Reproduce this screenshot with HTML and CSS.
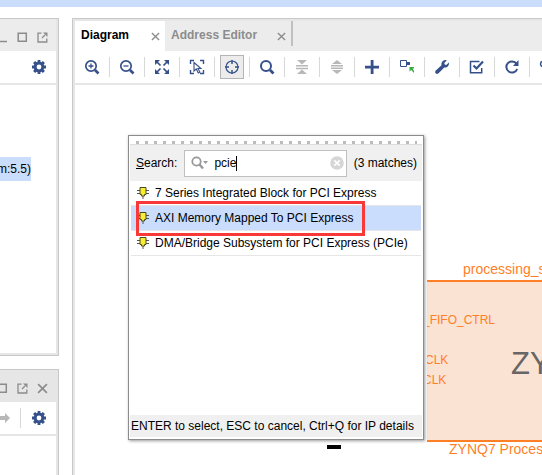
FILE: index.html
```html
<!DOCTYPE html>
<html lang="en">
<head>
<meta charset="utf-8">
<title>Block Design</title>
<link rel="stylesheet" href="styles.css">
</head>
<body>
<svg class="defs" aria-hidden="true">
  <symbol id="gear" viewBox="0 0 14 14"><path fill="currentColor" fill-rule="evenodd" d="M5.6 0h2.8v1.7l1.1.5 1.3-1.2 2.1 2.1-1.2 1.3.5 1.2H14v2.8h-1.9l-.5 1.2 1.3 1.3-2.1 2.1-1.3-1.2-1.1.5V14H5.6v-1.7l-1.1-.5L3.200 13 1.100 10.900l1.200-1.300-.5-1.200H0V5.600h1.800l.5-1.200-1.200-1.300 2.100-2.100 1.300 1.200 1.100-.5zM7 4.600a2.400 2.400 0 1 0 0 4.800 2.400 2.400 0 0 0 0-4.800z"/></symbol>
  <symbol id="square" viewBox="0 0 11 11"><path fill="none" stroke="currentColor" stroke-width="1.500" d="M1.200 1.200h8.100v8.100H1.200z"/></symbol>
  <symbol id="popout" viewBox="0 0 11 11"><path fill="none" stroke="currentColor" stroke-width="1.300" d="M4.500 1.200H1v8.800h8.800V6.500M5 6l3-3"/><path fill="currentColor" d="M6 .5h4.500V5z"/></symbol>
  <symbol id="cross" viewBox="0 0 10 10"><path fill="none" stroke="currentColor" stroke-width="1.500" d="M1 1l8 8M9 1L1 9"/></symbol>
  <symbol id="ip" viewBox="0 0 12 12"><path stroke="#555" fill="none" d="M0 3.500h12M0 6.500h12M6 8v4"/><path fill="#f8ed35" stroke="#4a4a22" d="M3 .5h6v7H7.500v1.500h-3V7.500H3z"/></symbol>
</svg>
<div class="band"></div>
<main class="workspace">
  <aside class="side">
    <section class="panel sources">
      <header class="panel-head">
        <button aria-label="Minimize"><svg width="11" height="11" viewBox="0 0 11 11"><path stroke="currentColor" stroke-width="1.500" d="M0 9.500h10"/></svg></button>
        <button aria-label="Maximize"><svg width="11" height="11"><use href="#square"/></svg></button>
        <button aria-label="Float"><svg width="11" height="11"><use href="#popout"/></svg></button>
      </header>
      <div class="panel-tools"><button aria-label="Settings"><svg width="14" height="14"><use href="#gear"/></svg></button></div>
      <div class="source-item">m:5.5)</div>
    </section>
    <section class="panel properties">
      <header class="panel-head">
        <button aria-label="Maximize"><svg width="11" height="11"><use href="#square"/></svg></button>
        <button aria-label="Float"><svg width="11" height="11"><use href="#popout"/></svg></button>
        <button aria-label="Close"><svg width="11" height="11"><use href="#cross"/></svg></button>
      </header>
      <div class="panel-tools">
        <button class="next" aria-label="Next"><svg width="13" height="12" viewBox="0 0 13 12"><path fill="#b8b8b8" d="M0 4h7V1l5 5-5 5V8H0z"/></svg></button>
        <button aria-label="Settings"><svg width="14" height="14"><use href="#gear"/></svg></button>
      </div>
    </section>
  </aside>
  <section class="editor">
    <nav class="tabs">
      <div class="tab active"><a href="#diagram">Diagram</a><button aria-label="Close Diagram"><svg width="9" height="9"><use href="#cross"/></svg></button></div>
      <div class="tab"><a href="#address">Address Editor</a><button aria-label="Close Address Editor"><svg width="9" height="9"><use href="#cross"/></svg></button></div>
    </nav>
    <div class="toolbar">
      <div class="tool"><button aria-label="Zoom in"><svg width="16" height="16" viewBox="0 0 16 16"><g fill="none" stroke="currentColor"><circle cx="7" cy="7" r="5.200" stroke-width="1.700"/><path stroke-width="2.600" d="M11 11l3.500 3.500"/><path stroke-width="1.300" d="M4.500 7h5M7 4.500v5"/></g></svg></button></div>
      <div class="tool"><button aria-label="Zoom out"><svg width="16" height="16" viewBox="0 0 16 16"><g fill="none" stroke="currentColor"><circle cx="7" cy="7" r="5.200" stroke-width="1.700"/><path stroke-width="2.600" d="M11 11l3.500 3.500"/><path stroke-width="1.300" d="M4.500 7h5"/></g></svg></button></div>
      <div class="tool"><button aria-label="Zoom fit"><svg width="16" height="16" viewBox="0 0 16 16"><path fill="currentColor" d="M1 1h5L1 6zM15 1v5l-5-5zM1 15v-5l5 5zM15 15h-5l5-5z"/><path stroke="currentColor" stroke-width="1.700" d="M2 2l4.500 4.500M14 2L9.500 6.500M2 14l4.500-4.500M14 14L9.500 9.500"/></svg></button></div>
      <div class="tool"><button aria-label="Select area"><svg width="16" height="16" viewBox="0 0 16 16"><g fill="none" stroke="currentColor"><path stroke-width="1.400" d="M1.500 5V1.500H5M11 1.500h3.500V5M1.500 11v3.500H5M11 14.500h3.500V11"/><path stroke-width="1.100" d="M5 3.500v8.500l2.300-2 2 4 1.600-1-2-3.500h3z"/></g></svg></button></div>
      <div class="tool"><button class="pressed" aria-label="Auto-fit selection"><svg width="16" height="16" viewBox="0 0 16 16"><g fill="none" stroke="currentColor"><circle cx="8" cy="8" r="6" stroke-width="1.200"/><path stroke-width="1.500" d="M8 1v4M8 11v4M1 8h4M11 8h4"/></g></svg></button></div>
      <div class="tool"><button aria-label="Search"><svg width="16" height="16" viewBox="0 0 16 16"><g fill="none" stroke="currentColor"><circle cx="7" cy="7" r="5" stroke-width="2"/><path stroke-width="2.800" d="M11 11l3.500 3.500"/></g></svg></button></div>
      <div class="tool"><button class="off" aria-label="Collapse"><svg width="16" height="16" viewBox="0 0 16 16"><path fill="currentColor" d="M3 1h10L8 5.500zM3 15h10l-5-4.500zM2 6h12v1.500H2zM2 8.800h12v1.500H2z"/></svg></button></div>
      <div class="tool"><button class="off" aria-label="Expand"><svg width="16" height="16" viewBox="0 0 16 16"><path fill="currentColor" d="M3 5h10L8 1zM3 11h10l-5 4zM2 6h12v1.500H2zM2 8.500h12V10H2z"/></svg></button></div>
      <div class="tool"><button aria-label="Add IP"><svg width="16" height="16" viewBox="0 0 16 16"><path fill="currentColor" d="M6.700 1h2.800v5.700H15v2.800H9.500V15H6.700V9.500H1V6.700h5.700z"/></svg></button></div>
      <div class="tool"><button aria-label="Make external"><svg width="16" height="16" viewBox="0 0 16 16"><path fill="none" stroke="currentColor" d="M1.500 1.500h6v6h-6z"/><path fill="currentColor" d="M8 3h3v3H8z"/><path fill="#38ab48" d="M10.500 8H15v1.500h-1.500L15 12v2l-2.800-3-1.700 1.500z"/></svg></button></div>
      <div class="tool"><button aria-label="Customize"><svg width="16" height="16" viewBox="0 0 16 16"><path fill="currentColor" d="M12.800 1.200L10.300 4l.4 1.500 1.500.4L15 3.500c.4 3-1.600 5.300-4.700 5l-6 6c-2 1.300-4-.7-2.800-2.700l6-5.600C7 3 9.500.5 12.800 1.200z"/></svg></button></div>
      <div class="tool"><button aria-label="Validate"><svg width="16" height="16" viewBox="0 0 16 16"><g fill="none" stroke="currentColor"><path stroke-width="1.500" d="M10.500 2.500h-9v11.200h11.200V9"/><path stroke-width="2.200" d="M4.500 6.500L7.500 9.500 14 2.500"/></g></svg></button></div>
      <div class="tool"><button aria-label="Regenerate"><svg width="16" height="16" viewBox="0 0 16 16"><path fill="none" stroke="currentColor" stroke-width="2" d="M12.500 4.700A5.600 5.600 0 1 0 13.200 10"/><path fill="currentColor" d="M14.500 1v6H9z"/></svg></button></div>
      <div class="tool"><button aria-label="Optimize routing"><svg width="16" height="16" viewBox="0 0 16 16"><g fill="none" stroke="currentColor" stroke-width="1.500"><circle cx="4" cy="5" r="2.500"/><path d="M6 5h6v7H3"/></g></svg></button></div>
    </div>
    <div class="canvas">
      <span class="node-name">processing_s</span>
      <div class="node">
        <span class="port fifo">_FIFO_CTRL</span>
        <span class="port clock-a">CLK</span>
        <span class="port clock-b">CLK</span>
        <span class="brand">ZY</span>
      </div>
      <span class="node-type">ZYNQ7 Proces</span>
      <span class="pin"></span>
    </div>
  </section>
</main>
<div class="dialog" role="dialog" aria-label="Add IP">
  <div class="grip"></div>
  <div class="search">
    <label for="query"><u>S</u>earch:</label>
    <div class="field">
      <svg width="18" height="14" viewBox="0 0 18 14"><circle cx="5.500" cy="5.500" r="4.200" fill="none" stroke="#999" stroke-width="1.800"/><path stroke="#999" stroke-width="2.400" d="M8.500 8.500l3.500 4"/><path fill="#999" d="M12 5h5l-2.500 3z"/></svg>
      <input id="query" type="text" value="pcie"><span class="caret"></span>
      <button class="clear" aria-label="Clear"><svg width="14" height="14" viewBox="0 0 14 14"><circle cx="7" cy="7" r="6.800" fill="#d6d6d6"/><path stroke="#fff" stroke-width="1.700" d="M4.300 4.300l5.400 5.400M9.700 4.300L4.300 9.700"/></svg></button>
    </div>
    <span>(3 matches)</span>
  </div>
  <ul class="results">
    <li><svg width="12" height="12"><use href="#ip"/></svg>7 Series Integrated Block for PCI Express</li>
    <li class="selected"><svg width="12" height="12"><use href="#ip"/></svg>AXI Memory Mapped To PCI Express<span class="marker"></span></li>
    <li><svg width="12" height="12"><use href="#ip"/></svg>DMA/Bridge Subsystem for PCI Express (PCIe)</li>
  </ul>
  <footer class="hint">ENTER to select, ESC to cancel, Ctrl+Q for IP details</footer>
</div>
</body>
</html>
```

FILE: styles.css
```css
* { box-sizing: border-box; }
body {
  margin: 0;
  height: 100vh;
  display: flex;
  flex-direction: column;
  overflow: hidden;
  background: #fff;
  color: #000;
  font: 12px/16px "Liberation Sans", Arial, sans-serif;
}
svg { display: block; flex: none; }
.defs { position: absolute; width: 0; height: 0; }
button { padding: 0; border: 0; background: none; color: inherit; font: inherit; }
a { color: inherit; text-decoration: none; }

.band { flex: none; height: 7px; background: #cbddfd; }
.workspace { flex: 1; min-height: 0; display: flex; gap: 13px; padding-top: 11px; }

/* Left column */
.side { flex: none; width: 59px; display: flex; flex-direction: column; gap: 13px; }
.panel {
  border: solid #c8c8c8;
  border-width: 1px 1px 1px 0;
  box-shadow: inset -2px -2px #e6e6e6;
  padding-right: 2px;
  overflow: hidden;
}
.sources { flex: 1; }
.properties { flex: none; height: 106px; border-bottom: 0; box-shadow: inset -2px 0 #e6e6e6; }
.panel-head {
  height: 32px;
  display: flex;
  align-items: center;
  justify-content: flex-end;
  gap: 9px;
  padding: 4px 8px 0 0;
  background: #ececec;
  color: #8c8c8c;
}
.properties .panel-head { background: #e6e6e6; }
.panel-tools {
  height: 34px;
  display: flex;
  align-items: center;
  justify-content: flex-end;
  padding-right: 10px;
  border-bottom: 2px solid #e6e6e6;
  color: #35508a;
}
.next { height: 20px; padding-right: 9px; margin-right: 11px; border-right: 1px solid #d8d8d8; }
.source-item {
  float: right;
  margin: 72px 25px 0 0;
  padding: 4px 0;
  background: #cbddfd;
  white-space: nowrap;
}

/* Diagram editor */
.editor {
  flex: 1;
  min-width: 0;
  display: flex;
  flex-direction: column;
  border: solid #c8c8c8;
  border-width: 1px 0 0 1px;
  box-shadow: inset 2px 2px #e6e6e6;
  padding: 2px 0 0 2px;
}
.tabs { flex: none; height: 30px; display: flex; background: #ececec; }
.tab {
  display: flex;
  align-items: flex-start;
  justify-content: space-between;
  gap: 20px;
  padding: 6px 5px 0 6px;
  color: #8c8c8c;
  font-weight: bold;
}
.tab button { margin-top: 5px; color: #8c8c8c; }
.tab:last-child { height: 25px; border-right: 2px solid #c0c0c0; }
.tab.active { gap: 22px; background: #fff; color: #000; }
.toolbar {
  flex: none;
  height: 34px;
  display: flex;
  align-items: center;
  overflow: hidden;
  border-bottom: 2px solid #e6e6e6;
  color: #35508a;
}
.tool {
  flex: none;
  width: 35px;
  height: 20px;
  display: flex;
  align-items: center;
  justify-content: center;
  border-right: 1px solid #d8d8d8;
}
.tool button { flex: none; width: 24px; height: 24px; display: grid; place-items: center; }
.tool .pressed { border: 1px solid #b4b4b4; background: #ececec; }
.tool .off { color: #b8b8b8; }

/* Free canvas: block design nodes */
.canvas { flex: 1; min-height: 0; position: relative; overflow: hidden; color: #ff7f27; }
.canvas span { position: absolute; white-space: nowrap; }
.node-name { left: 388px; top: 176px; font-size: 14px; }
.node {
  position: absolute;
  left: 352px;
  right: 0;
  top: 195px;
  height: 162px;
  overflow: hidden;
  border: solid #ff7f27;
  border-width: 2px 0;
  background: #fbe3d4;
}
.port { font-size: 12px; }
.port.fifo { left: -4px; top: 30px; }
.port.clock-a { left: -2px; top: 70px; }
.port.clock-b { left: -4px; top: 90px; }
.brand { left: 84px; top: 64px; color: #666; font-size: 31px; line-height: 36px; }
.node-type { left: 374px; top: 356px; font-size: 14px; }
.pin { left: 252px; top: 360px; width: 14px; height: 4px; background: #000; }

/* IP search popup */
.dialog {
  position: absolute;
  left: 128px;
  top: 135px;
  width: 296px;
  height: 305px;
  display: flex;
  flex-direction: column;
  padding: 0 1px 2px;
  border: 1px solid #8c8c8c;
  background: #fff;
  box-shadow: 1px 1px 3px #999;
}
.grip {
  flex: none;
  height: 9px;
  padding: 5px 5px 0 6px;
  border-bottom: 1px solid #ddd;
}
.grip::before {
  content: "";
  display: block;
  height: 3px;
  background: repeating-linear-gradient(90deg, #bbb 0 3px, transparent 3px 9px);
}
.search {
  flex: none;
  height: 36px;
  display: flex;
  align-items: center;
  gap: 7px;
  padding: 0 5px 0 6px;
  background: #f0f0f0;
  white-space: nowrap;
}
.field {
  flex: 1;
  min-width: 0;
  height: 27px;
  display: flex;
  align-items: center;
  padding: 0 2px 0 6px;
  border: 1px solid #c0c0c0;
  background: #fff;
}
.field input {
  field-sizing: content;
  margin-left: 5px;
  padding: 0;
  border: 0;
  outline: 0;
  background: none;
  font: inherit;
}
.caret { width: 1px; height: 15px; background: #000; }
.clear { margin-left: auto; }
.results { flex: 1; margin: 0; padding: 0 1px; list-style: none; }
.results li {
  position: relative;
  height: 25px;
  display: flex;
  align-items: center;
  gap: 6px;
  padding-left: 6px;
  border-bottom: 1px solid #e6e6e6;
  white-space: nowrap;
}
.results .selected { background: #cbddfd; }
.marker {
  position: absolute;
  z-index: 1;
  left: 5px;
  right: 56px;
  top: -5px;
  bottom: -6px;
  border: 3px solid #f93838;
}
.hint { flex: none; height: 22px; padding: 3px 1px; background: #f0f0f0; white-space: nowrap; }
```
